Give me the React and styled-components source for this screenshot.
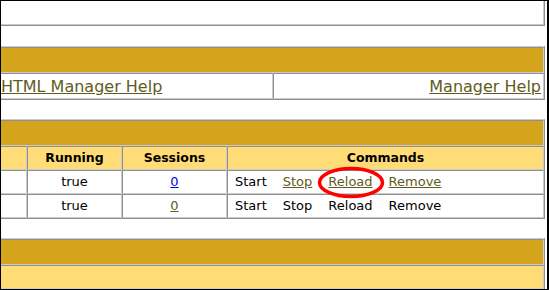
import React from 'react';
import styled, { createGlobalStyle } from 'styled-components';

const DARK = '#8f8f8f';
const LIGHT = '#cbcbcb';
const GOLD = '#D4A51C';
const CREAM = '#FFDC75';
const OLIVE = '#5f5c1d';

const GlobalStyle = createGlobalStyle`
  html, body { margin: 0; padding: 0; background: #fff; }
  body { font-family: "DejaVu Sans", Verdana, sans-serif; color: #000; }
`;

const Frame = styled.div`
  position: relative;
  box-sizing: border-box;
  width: 549px;
  height: 290px;
  border: 1px solid #000;
  border-right-width: 2px;
  background: #fff;
  overflow: hidden;
  display: flex;
  flex-direction: column;
  align-items: flex-start;
`;

const Table = styled.table`
  box-sizing: border-box;
  flex: none;
  width: 544px;
  border-collapse: separate;
  border-spacing: 0;
  border-style: solid;
  border-width: ${p => (p.$openTop ? 0 : 1)}px 1px 1px 0;
  border-color: ${LIGHT} ${DARK} ${DARK} ${LIGHT};
  margin-top: ${p => p.$gap || 0}px;
`;

const Cell = styled.td`
  box-sizing: border-box;
  border-style: solid;
  border-width: ${p => (p.$openTop ? 0 : 1)}px 1px 1px ${p => (p.$openLeft ? 0 : 1)}px;
  border-color: ${DARK} ${LIGHT} ${LIGHT} ${DARK};
  padding: 3px;
  font-size: 13px;
  line-height: 16px;
  vertical-align: middle;
  white-space: nowrap;
  ${p => (p.$w ? `width: ${p.$w}px;` : '')}
`;

const BlankCell = styled(Cell)`
  line-height: 17px;
  background: #fff;
`;

const TitleCell = styled(Cell)`
  background: ${GOLD};
  line-height: 18px;
`;

const HeaderCell = styled(Cell)`
  background: ${CREAM};
  font-weight: bold;
  font-size: 12.5px;
  text-align: center;
  vertical-align: top;
`;

const DataCell = styled(Cell)`
  text-align: ${p => p.$align || 'center'};
  ${p => (p.$align === 'left' ? 'padding-left: 7px;' : '')}
`;

const MenuCell = styled(Cell)`
  font-size: 16px;
  line-height: 18px;
  padding: 4px 2px 2px 0;
  text-align: ${p => p.$align};
`;

const Link = styled.a`
  color: ${p => (p.$tone === 'blue' ? '#0000EE' : OLIVE)};
  text-decoration: underline;
  cursor: pointer;
`;

const Commands = styled.div`
  display: flex;
  gap: 16px;
`;

const Annotation = styled.svg`
  position: absolute;
  left: 316px;
  top: 165px;
  width: 70px;
  height: 34px;
  pointer-events: none;
  overflow: visible;
`;

const apps = [
  { running: 'true', sessions: '0', tone: 'blue', active: true },
  { running: 'true', sessions: '0', tone: 'olive', active: false },
];

function CommandList({ active }) {
  const items = ['Stop', 'Reload', 'Remove'];
  return (
    <Commands>
      <span>Start</span>
      {items.map(name =>
        active ? (
          <Link key={name} $tone="olive">{name}</Link>
        ) : (
          <span key={name}>{name}</span>
        )
      )}
    </Commands>
  );
}

export default function App() {
  return (
    <>
      <GlobalStyle />
      <Frame>
        <Table $openTop>
          <tbody>
            <tr>
              <BlankCell $openTop $openLeft>&nbsp;</BlankCell>
            </tr>
          </tbody>
        </Table>

        <Table $gap={20}>
          <tbody>
            <tr>
              <TitleCell $openLeft colSpan={2}>&nbsp;</TitleCell>
            </tr>
            <tr>
              <MenuCell $openLeft $align="left" $w={272}>
                <Link>HTML Manager Help</Link>
              </MenuCell>
              <MenuCell $align="right" $w={271}>
                <Link>Manager Help</Link>
              </MenuCell>
            </tr>
          </tbody>
        </Table>

        <Table $gap={19}>
          <tbody>
            <tr>
              <TitleCell $openLeft colSpan={4}>&nbsp;</TitleCell>
            </tr>
            <tr>
              <HeaderCell $openLeft $w={26}>&nbsp;</HeaderCell>
              <HeaderCell $w={95}>Running</HeaderCell>
              <HeaderCell $w={105}>Sessions</HeaderCell>
              <HeaderCell $w={317}>Commands</HeaderCell>
            </tr>
            {apps.map((app, i) => (
              <tr key={i}>
                <DataCell $openLeft>&nbsp;</DataCell>
                <DataCell>{app.running}</DataCell>
                <DataCell>
                  <Link $tone={app.tone}>{app.sessions}</Link>
                </DataCell>
                <DataCell $align="left">
                  <CommandList active={app.active} />
                </DataCell>
              </tr>
            ))}
          </tbody>
        </Table>

        <Table $gap={19}>
          <tbody>
            <tr>
              <TitleCell $openLeft>&nbsp;</TitleCell>
            </tr>
            <tr>
              <HeaderCell $openLeft>&nbsp;</HeaderCell>
            </tr>
          </tbody>
        </Table>

        <Annotation viewBox="0 0 70 34">
          <ellipse cx="34" cy="16.5" rx="31.5" ry="14" fill="none" stroke="#f00" strokeWidth="3.5" />
        </Annotation>
      </Frame>
    </>
  );
}
